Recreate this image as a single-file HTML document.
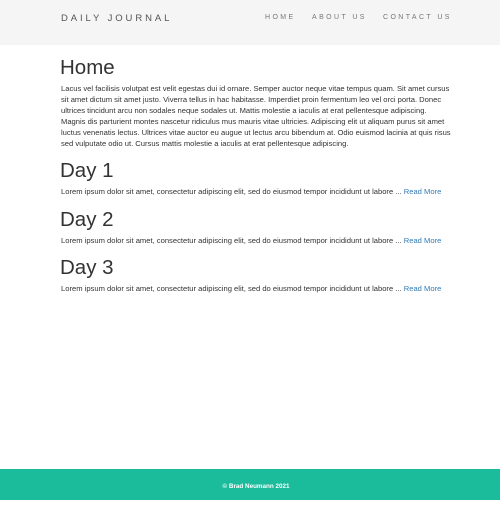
<!DOCTYPE html>
<html><head><style>
*{margin:0;padding:0;box-sizing:border-box}
body{width:500px;height:500px;position:relative;background:#fff;font-family:"Liberation Sans",Arial,sans-serif;color:#333;overflow:hidden}
.nav{position:absolute;left:0;top:0;width:500px;height:45px;background:#f5f5f5}
.brand{position:absolute;left:61px;top:13px;font-size:9.5px;letter-spacing:2.9px;color:#555}
.links{position:absolute;top:14px;font-size:7px;letter-spacing:2.4px;color:#777}
h1{position:absolute;left:60px;font-size:20.5px;font-weight:400;color:#333;line-height:1}
p{position:absolute;left:61px;width:430px;white-space:nowrap;font-size:7.6px;line-height:11px;color:#333}
a{color:#337ab7;text-decoration:none}
.foot{position:absolute;left:0;top:469px;width:500px;height:31px;background:#1abc9c;color:#fff;font-size:6.3px;font-weight:bold;text-align:center;line-height:36px;padding-left:12px}
</style></head><body>
<div class="nav">
<div class="brand">DAILY JOURNAL</div>
<div class="links" style="left:265px">HOME</div>
<div class="links" style="left:312px">ABOUT US</div>
<div class="links" style="left:383px">CONTACT US</div>
</div>
<h1 style="top:58px">Home</h1>
<p style="top:83px">Lacus vel facilisis volutpat est velit egestas dui id ornare. Semper auctor neque vitae tempus quam. Sit amet cursus<br>sit amet dictum sit amet justo. Viverra tellus in hac habitasse. Imperdiet proin fermentum leo vel orci porta. Donec<br>ultrices tincidunt arcu non sodales neque sodales ut. Mattis molestie a iaculis at erat pellentesque adipiscing.<br>Magnis dis parturient montes nascetur ridiculus mus mauris vitae ultricies. Adipiscing elit ut aliquam purus sit amet<br>luctus venenatis lectus. Ultrices vitae auctor eu augue ut lectus arcu bibendum at. Odio euismod lacinia at quis risus<br>sed vulputate odio ut. Cursus mattis molestie a iaculis at erat pellentesque adipiscing.</p>
<h1 style="top:161px">Day 1</h1>
<p style="top:186px">Lorem ipsum dolor sit amet, consectetur adipiscing elit, sed do eiusmod tempor incididunt ut labore ... <a>Read More</a></p>
<h1 style="top:210px">Day 2</h1>
<p style="top:235px">Lorem ipsum dolor sit amet, consectetur adipiscing elit, sed do eiusmod tempor incididunt ut labore ... <a>Read More</a></p>
<h1 style="top:258px">Day 3</h1>
<p style="top:283px">Lorem ipsum dolor sit amet, consectetur adipiscing elit, sed do eiusmod tempor incididunt ut labore ... <a>Read More</a></p>
<div class="foot">© Brad Neumann 2021</div>
</body></html>
